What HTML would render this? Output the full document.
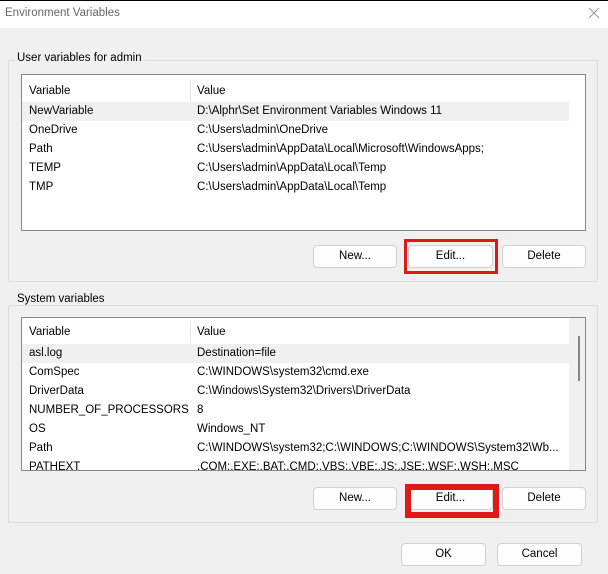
<!DOCTYPE html><html><head><style>
*{margin:0;padding:0;box-sizing:border-box}
body{width:608px;height:574px;background:#f0f0f0;font-family:"Liberation Sans",sans-serif;font-size:11.5px;color:#000;position:relative;overflow:hidden}
.t{position:absolute;left:0;top:0;width:608px;height:28px;background:#fff;border-top:1px solid #000}
.t span{position:absolute;left:5px;top:6px;color:#666;font-size:11.5px}
.t svg{position:absolute;right:8px;top:6px}
.g{position:absolute;border:1px solid #dcdcdc;border-radius:2px}
.lg{position:absolute;background:#f0f0f0;padding:0 3px}
.lb{position:absolute;background:#fff;border:1px solid #828790;overflow:hidden}
.r{position:absolute;left:0;height:19px;line-height:19px;width:100%;white-space:nowrap}
.r span{position:absolute;left:7px}.r i{position:absolute;left:175px;font-style:normal}
.btn{position:absolute;height:23px;background:#fdfdfd;border:1px solid #d0d0d0;border-radius:4px;text-align:center;line-height:21px}
.red{position:absolute;border:3px solid #e01818}
</style></head><body>
<div class="t"><span>Environment Variables</span><svg width="12" height="12" viewBox="0 0 12 12"><path d="M1 1L11 11M11 1L1 11" stroke="#999" stroke-width="1"/></svg></div>
<div class="g" style="left:8px;top:60px;width:590px;height:222px"></div>
<div class="lg" style="left:14px;top:52px">User variables for admin</div>
<div class="lb" style="left:21px;top:74px;width:565px;height:157px">
<div class="r" style="top:5px;height:22px;line-height:22px;width:547px"><span>Variable</span><i>Value</i><div style="position:absolute;left:168px;top:0;height:22px;border-left:1px solid #e5e5e5"></div></div>
<div class="r" style="top:27px;background:#f0f0f0;width:547px"><span>NewVariable</span><i>D:\Alphr\Set Environment Variables Windows 11</i></div>
<div class="r" style="top:46px"><span>OneDrive</span><i>C:\Users\admin\OneDrive</i></div>
<div class="r" style="top:65px"><span>Path</span><i>C:\Users\admin\AppData\Local\Microsoft\WindowsApps;</i></div>
<div class="r" style="top:84px"><span>TEMP</span><i>C:\Users\admin\AppData\Local\Temp</i></div>
<div class="r" style="top:103px"><span>TMP</span><i>C:\Users\admin\AppData\Local\Temp</i></div>
</div>
<div class="btn" style="left:313px;top:245px;width:84px">New...</div>
<div class="btn" style="left:408px;top:245px;width:85px">Edit...</div>
<div class="btn" style="left:502px;top:245px;width:84px">Delete</div>
<div class="red" style="left:404px;top:239px;width:94px;height:35px"></div>

<div class="g" style="left:8px;top:305px;width:590px;height:218px"></div>
<div class="lg" style="left:14px;top:293px">System variables</div>
<div class="lb" style="left:21px;top:317px;width:565px;height:154px">
<div class="r" style="top:3px;height:22px;line-height:22px;width:547px"><span>Variable</span><i>Value</i><div style="position:absolute;left:168px;top:0;height:22px;border-left:1px solid #e5e5e5"></div></div>
<div class="r" style="top:26px;background:#f0f0f0;width:547px"><span>asl.log</span><i>Destination=file</i></div>
<div class="r" style="top:45px"><span>ComSpec</span><i>C:\WINDOWS\system32\cmd.exe</i></div>
<div class="r" style="top:64px"><span>DriverData</span><i>C:\Windows\System32\Drivers\DriverData</i></div>
<div class="r" style="top:83px"><span>NUMBER_OF_PROCESSORS</span><i>8</i></div>
<div class="r" style="top:102px"><span>OS</span><i>Windows_NT</i></div>
<div class="r" style="top:121px"><span>Path</span><i>C:\WINDOWS\system32;C:\WINDOWS;C:\WINDOWS\System32\Wb...</i></div>
<div class="r" style="top:140px"><span>PATHEXT</span><i>.COM;.EXE;.BAT;.CMD;.VBS;.VBE;.JS;.JSE;.WSF;.WSH;.MSC</i></div>
<div style="position:absolute;left:547px;top:0;width:17px;height:154px;background:#f0f0f0"></div>
<div style="position:absolute;left:556px;top:18px;width:2px;height:45px;background:#858585"></div>
</div>
<div class="btn" style="left:313px;top:487px;width:84px">New...</div>
<div class="btn" style="left:408px;top:487px;width:85px">Edit...</div>
<div class="btn" style="left:502px;top:487px;width:84px">Delete</div>
<div class="red" style="left:405px;top:484px;width:94px;height:34px;border-width:6px"></div>

<div class="btn" style="left:401px;top:543px;width:85px">OK</div>
<div class="btn" style="left:497px;top:543px;width:85px">Cancel</div>
</body></html>
